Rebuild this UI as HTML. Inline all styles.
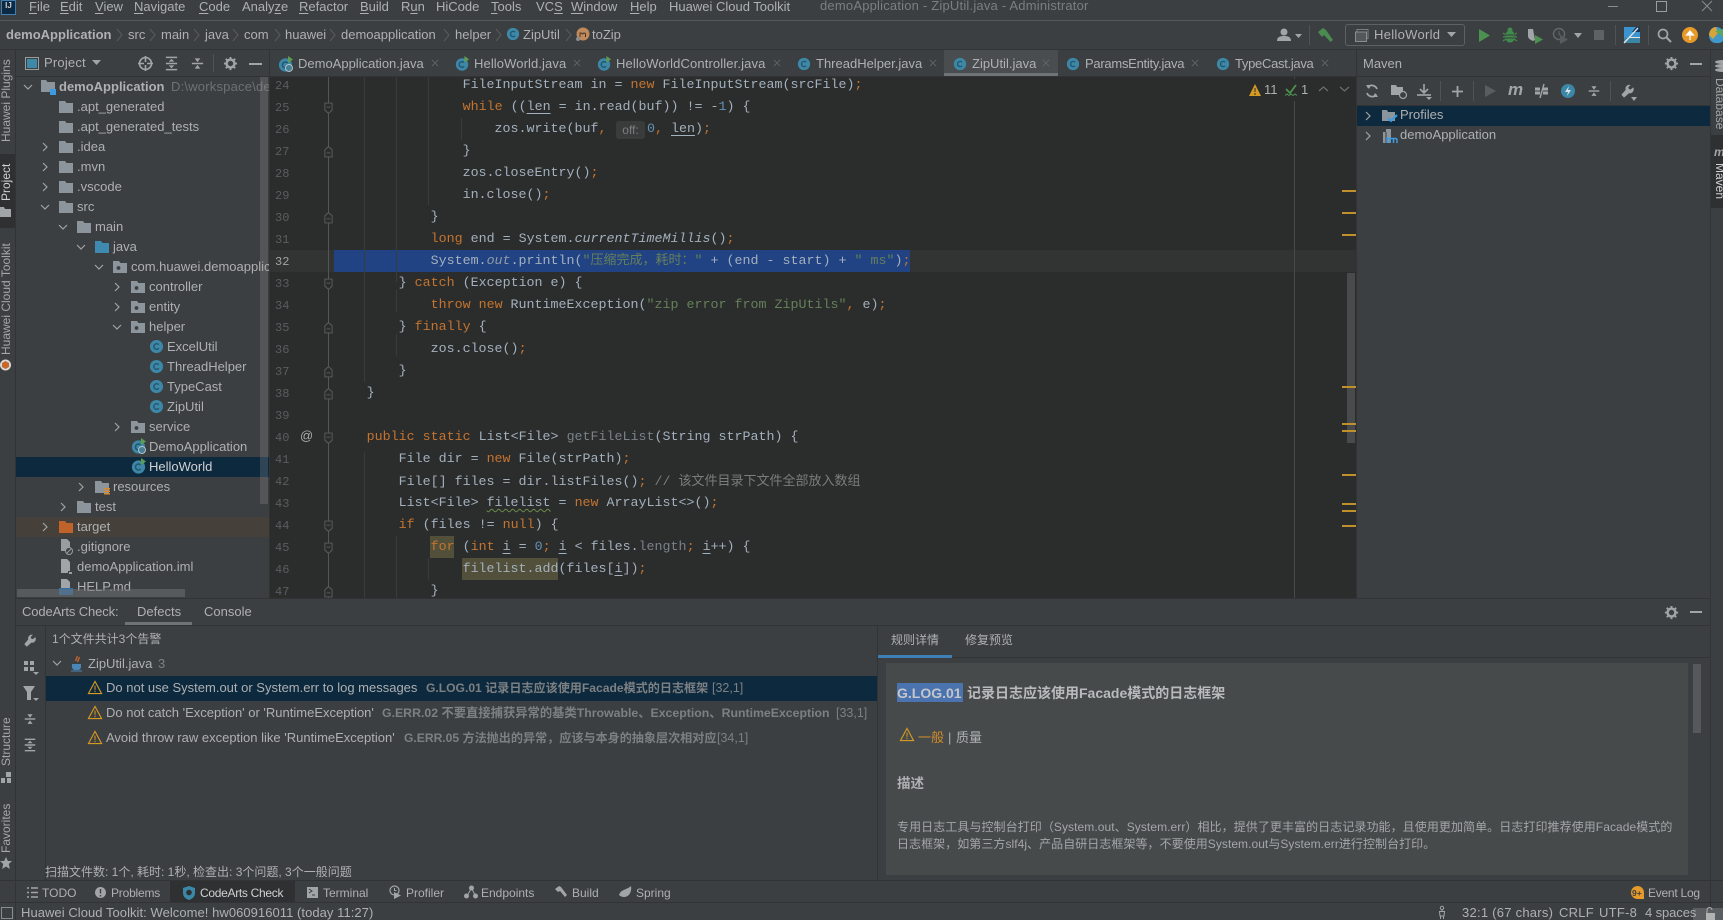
<!DOCTYPE html>
<html><head><meta charset="utf-8"><title>demoApplication - ZipUtil.java</title>
<style>
html,body{margin:0;padding:0;background:#3c3f41;width:1723px;height:920px;overflow:hidden}
body{position:relative;font:13px/20px "Liberation Sans","Noto Sans CJK SC",sans-serif;color:#aeb0b2}
.a,.r,.i,.v,.c,.l{position:absolute}
.a{white-space:pre;height:20px}
.r{display:block}
.i{display:block;overflow:visible}
.v{writing-mode:vertical-rl;white-space:pre;line-height:14px;font-size:12.5px;color:#a4a6a8}
.u{text-decoration:underline;text-decoration-thickness:1px;text-underline-offset:2px}
.c{left:334.6px;height:22px;font:13.33px/22px "Liberation Mono","Noto Sans CJK SC",monospace;color:#a3b0bd;white-space:pre}
.l{left:275px;height:22px;font:12px/22px "Liberation Mono",monospace;color:#5a5d60;white-space:pre}
.k{color:#c4742f}.s{color:#65805a}.n{color:#6591b3}.d{color:#7a8289}.m{color:#7c7c7c}.o{color:#8f9ba7;font-style:italic}
.w{text-decoration:underline wavy #6a8c4a 1px;text-underline-offset:2px}
.un{text-decoration:underline;text-underline-offset:3px}
.dim{color:#7d8082;font-weight:bold;font-size:12.1px}
.gr{color:#7d8082;font-size:12.5px}
</style></head><body>
<svg width="0" height="0" style="position:absolute">
<defs>
<symbol id="cl" viewBox="0 0 16 16"><circle cx="8" cy="8" r="7" fill="#3d88a8"/><path d="M10.4 6a3 3 0 1 0 0 4" fill="none" stroke="#25566c" stroke-width="1.5"/></symbol>
<symbol id="cr" viewBox="0 0 16 16"><circle cx="7.5" cy="9" r="6.6" fill="#3d88a8"/><path d="M9.7 7a3 3 0 1 0 0 4" fill="none" stroke="#25566c" stroke-width="1.5"/><path d="M10 0l5 3.5-5 3.5z" fill="#5e9c50"/></symbol>
<symbol id="f" viewBox="0 0 16 16"><path d="M1 2h6l1.5 2H15v10H1z" fill="#8c959c"/></symbol>
<symbol id="fb" viewBox="0 0 16 16"><path d="M1 2h6l1.5 2H15v10H1z" fill="#3f8ab0"/></symbol>
<symbol id="fo" viewBox="0 0 16 16"><path d="M1 2h6l1.5 2H15v10H1z" fill="#c0632b"/></symbol>
<symbol id="fp" viewBox="0 0 16 16"><path d="M1 2h6l1.5 2H15v10H1z" fill="#8c959c"/><circle cx="6.5" cy="9" r="1.9" fill="#3c3f41"/></symbol>
<symbol id="ch" viewBox="0 0 10 10"><path d="M3 1l4 4-4 4" fill="none" stroke="#a0a3a5" stroke-width="1.2"/></symbol>
<symbol id="cd" viewBox="0 0 10 10"><path d="M1 3l4 4 4-4" fill="none" stroke="#a0a3a5" stroke-width="1.2"/></symbol>
<symbol id="x" viewBox="0 0 10 10"><path d="M1 1l8 8M9 1l-8 8" stroke="#62666a" stroke-width="1"/></symbol>
<symbol id="warn" viewBox="0 0 16 16"><path d="M8 1.5L15 14.5H1z" fill="none" stroke="#d49a22" stroke-width="1.2"/><path d="M8 6v4.5M8 11.5v1.4" stroke="#d49a22" stroke-width="1.1"/></symbol>
<symbol id="gear" viewBox="0 0 16 16"><circle cx="8" cy="8" r="4.2" fill="none" stroke="#a2a5a7" stroke-width="2.6"/><path d="M8 1v2.4M8 12.6V15M1 8h2.4M12.6 8H15M3 3l1.8 1.8M11.2 11.2L13 13M13 3l-1.8 1.8M4.8 11.2L3 13" stroke="#a2a5a7" stroke-width="2"/></symbol>
<symbol id="fold" viewBox="0 0 10 14"><path d="M1 1.5h8v8L5 13 1 9.5z" fill="#2b2c2c" stroke="#5c5f61" stroke-width="1"/><path d="M3 6h4" stroke="#5c5f61"/></symbol>
<symbol id="fold2" viewBox="0 0 10 14"><path d="M1 12.5h8v-8L5 1 1 4.5z" fill="#2b2c2c" stroke="#5c5f61" stroke-width="1"/><path d="M3 8h4" stroke="#5c5f61"/></symbol>
<symbol id="wr" viewBox="0 0 16 16"><path d="M14 3.5l-2.6 2.4-2-.6-.5-2L11.300 1A4.200 4.200 0 0 0 6 6.200L1.500 11.500l2.800 3L9.600 9.800A4.200 4.200 0 0 0 14 3.500z" fill="#a2a5a7"/></symbol>
<symbol id="exp" viewBox="0 0 16 16"><path d="M2 1.500h12M2 14.500h12M2 8h12" stroke="#a2a5a7" stroke-width="1.600"/><path d="M8 3l-3 3h6zM8 13l-3-3h6z" fill="#a2a5a7"/></symbol>
<symbol id="col" viewBox="0 0 16 16"><path d="M2 8h12" stroke="#a2a5a7" stroke-width="1.600"/><path d="M8 6.500l-3-4h6zM8 9.500l-3 4h6z" fill="#a2a5a7"/></symbol>
</defs></svg>

<!-- menu -->
<div class="r" style="left:0;top:20px;width:1723px;height:1px;background:#55585a"></div>
<div class="r" style="left:1px;top:0;width:15px;height:15px;background:#0c2a44;border:1px solid #3f7fb0;box-sizing:border-box;color:#ccc;font:bold 8px/9px 'Liberation Sans',sans-serif;text-align:center">IJ</div>
<div class="a" style="left:29px;top:-3px"><span class="u">F</span>ile</div>
<div class="a" style="left:60px;top:-3px"><span class="u">E</span>dit</div>
<div class="a" style="left:95px;top:-3px"><span class="u">V</span>iew</div>
<div class="a" style="left:134px;top:-3px"><span class="u">N</span>avigate</div>
<div class="a" style="left:199px;top:-3px"><span class="u">C</span>ode</div>
<div class="a" style="left:242px;top:-3px">Analy<span class="u">z</span>e</div>
<div class="a" style="left:299px;top:-3px"><span class="u">R</span>efactor</div>
<div class="a" style="left:360px;top:-3px"><span class="u">B</span>uild</div>
<div class="a" style="left:401px;top:-3px">R<span class="u">u</span>n</div>
<div class="a" style="left:436px;top:-3px">HiCode</div>
<div class="a" style="left:491px;top:-3px"><span class="u">T</span>ools</div>
<div class="a" style="left:536px;top:-3px">VC<span class="u">S</span></div>
<div class="a" style="left:571px;top:-3px"><span class="u">W</span>indow</div>
<div class="a" style="left:630px;top:-3px"><span class="u">H</span>elp</div>
<div class="a" style="left:669px;top:-3px">Huawei Cloud Toolkit</div>
<div class="a" style="left:820px;top:-4px;color:#7c7f81;letter-spacing:.2px">demoApplication - ZipUtil.java - Administrator</div>
<div class="r" style="left:1608px;top:6px;width:10px;height:1px;background:#8a8d8f"></div>
<div class="r" style="left:1656px;top:1px;width:9px;height:9px;border:1px solid #9a9d9f"></div>
<svg class="i" style="left:1702px;top:1px" width="10" height="10"><path d="M0 0l10 10M10 0L0 10" stroke="#8a8d8f" stroke-width="1"/></svg>

<!-- breadcrumb -->
<div class="a" style="left:6px;top:25px;font-weight:bold">demoApplication</div>
<svg class="i" style="left:116px;top:28px" width="8" height="14"><path d="M1 1l5 6-5 6" fill="none" stroke="#595c5e"/></svg>
<div class="a" style="left:128px;top:25px">src</div>
<svg class="i" style="left:149px;top:28px" width="8" height="14"><path d="M1 1l5 6-5 6" fill="none" stroke="#595c5e"/></svg>
<div class="a" style="left:161px;top:25px">main</div>
<svg class="i" style="left:193px;top:28px" width="8" height="14"><path d="M1 1l5 6-5 6" fill="none" stroke="#595c5e"/></svg>
<div class="a" style="left:205px;top:25px">java</div>
<svg class="i" style="left:232px;top:28px" width="8" height="14"><path d="M1 1l5 6-5 6" fill="none" stroke="#595c5e"/></svg>
<div class="a" style="left:244px;top:25px">com</div>
<svg class="i" style="left:274px;top:28px" width="8" height="14"><path d="M1 1l5 6-5 6" fill="none" stroke="#595c5e"/></svg>
<div class="a" style="left:285px;top:25px">huawei</div>
<svg class="i" style="left:329px;top:28px" width="8" height="14"><path d="M1 1l5 6-5 6" fill="none" stroke="#595c5e"/></svg>
<div class="a" style="left:341px;top:25px">demoapplication</div>
<svg class="i" style="left:443px;top:28px" width="8" height="14"><path d="M1 1l5 6-5 6" fill="none" stroke="#595c5e"/></svg>
<div class="a" style="left:455px;top:25px">helper</div>
<svg class="i" style="left:495px;top:28px" width="8" height="14"><path d="M1 1l5 6-5 6" fill="none" stroke="#595c5e"/></svg>
<svg class="i" style="left:506px;top:27px" width="14" height="14"><use href="#cl"/></svg>
<div class="a" style="left:523px;top:25px">ZipUtil</div>
<svg class="i" style="left:565px;top:28px" width="8" height="14"><path d="M1 1l5 6-5 6" fill="none" stroke="#595c5e"/></svg>
<svg class="i" style="left:575px;top:27px" width="15" height="15"><circle cx="8" cy="7" r="6.500" fill="#c08a5c"/><path d="M5 10V6h1c.8 0 1 .4 1.500 1 .5-.6 1-1 1.700-1 .8 0 1.300.5 1.300 1.200V10" fill="none" stroke="#4a3421" stroke-width="1"/><circle cx="3" cy="12" r="2" fill="#8a8d8f"/></svg>
<div class="a" style="left:592px;top:25px">toZip</div>
<div class="r" style="left:0;top:49px;width:1723px;height:1px;background:#323335"></div>

<!-- main toolbar right -->
<svg class="i" style="left:1276px;top:28px" width="26" height="14"><circle cx="8" cy="4" r="3.500" fill="#a2a5a7"/><path d="M1 13c0-4 3-5 7-5s7 1 7 5z" fill="#a2a5a7"/><path d="M19 6h7l-3.500 4z" fill="#a2a5a7"/></svg>
<div class="r" style="left:1309px;top:25px;width:1px;height:20px;background:#505355"></div>
<svg class="i" style="left:1317px;top:27px" width="17" height="16"><path d="M1 5l5-4 3 2 7 10-2.500 2L7 8 5 10z" fill="#4b8a50"/></svg>
<div class="r" style="left:1345px;top:24px;width:120px;height:22px;border:1px solid #5e6163;border-radius:3px;box-sizing:border-box"></div>
<svg class="i" style="left:1355px;top:29px" width="14" height="13"><rect x="2" y="0.500" width="11" height="9" fill="none" stroke="#7c7f81"/><rect x="0.500" y="3" width="11" height="9.500" fill="#55585a" stroke="#8a8d8f"/></svg>
<div class="a" style="left:1374px;top:25px;letter-spacing:.3px">HelloWorld</div>
<svg class="i" style="left:1447px;top:32px" width="10" height="6"><path d="M0 0h9L4.500 5z" fill="#a2a5a7"/></svg>
<svg class="i" style="left:1479px;top:29px" width="11" height="13"><path d="M0 0l11 6.500L0 13z" fill="#4d9150"/></svg>
<svg class="i" style="left:1503px;top:27px" width="14" height="16"><ellipse cx="7" cy="9.500" rx="5" ry="6" fill="#3f8a4c"/><circle cx="7" cy="3" r="2.500" fill="#3f8a4c"/><path d="M0 6l3 2M14 6l-3 2M0 10h3M14 10h-3M0 14l3-2M14 14l-3-2" stroke="#3f8a4c" stroke-width="1.300"/><path d="M2 8h10M2 11h10" stroke="#3c3f41"/></svg>
<svg class="i" style="left:1528px;top:28px" width="16" height="16"><path d="M0 1h10v7c0 3-3 4-5 5-2-1-5-2-5-5z" fill="#a2a5a7"/><path d="M5 1h5v7c0 2-1.500 3-3 4" fill="#3c3f41"/><path d="M7 7l8 4.500L7 16z" fill="#4d9150"/></svg>
<svg class="i" style="left:1553px;top:28px" width="15" height="16" opacity=".5"><circle cx="6" cy="6" r="5.500" fill="none" stroke="#8a8d8f" stroke-width="1.400"/><path d="M6 3v3l2 2" fill="none" stroke="#8a8d8f"/><path d="M7 7l8 4.500L7 16z" fill="#77797b"/></svg>
<svg class="i" style="left:1574px;top:33px" width="8" height="5"><path d="M0 0h8L4 5z" fill="#a2a5a7"/></svg>
<div class="r" style="left:1594px;top:30px;width:10px;height:10px;background:#5f6264"></div>
<div class="r" style="left:1615px;top:25px;width:1px;height:20px;background:#505355"></div>
<svg class="i" style="left:1624px;top:27px" width="16" height="16"><rect width="16" height="16" fill="#3a94d0"/><path d="M16 0v5H8l4-5z" fill="#16365a"/><rect y="11" width="16" height="5" fill="#3a86a4"/><path d="M0 16L14 1" stroke="#e6e6e6" stroke-width="1.300"/><path d="M6 10.500h10" stroke="#e6e6e6"/></svg>
<div class="r" style="left:1648px;top:25px;width:1px;height:20px;background:#505355"></div>
<svg class="i" style="left:1657px;top:28px" width="15" height="15"><circle cx="6" cy="6" r="4.500" fill="none" stroke="#a2a5a7" stroke-width="1.700"/><path d="M9.500 9.500L14 14" stroke="#a2a5a7" stroke-width="2"/></svg>
<svg class="i" style="left:1682px;top:27px" width="16" height="16"><circle cx="8" cy="8" r="8" fill="#e69a2a"/><path d="M8 13V6M4.500 8L8 4l3.500 4z" stroke="#fff" fill="#fff" stroke-width="1.200"/></svg>
<svg class="i" style="left:1709px;top:27px" width="14" height="16"><path d="M7 0a8 8 0 0 1 7 4v10a8 8 0 0 1-7 2C2 16 0 12 0 8s3-8 7-8z" fill="#3f98c8"/><path d="M0 8c0-4 3-8 7-8l2 6-5 6z" fill="#d6a43a"/><path d="M6 4l8-2v8z" fill="#5aa860"/></svg>

<!-- left strip -->
<div class="r" style="left:15px;top:50px;width:1px;height:870px;background:#323335"></div>
<div class="r" style="left:0;top:154px;width:15px;height:74px;background:#2e3032"></div>
<div class="v" style="left:-1px;top:60px;transform:rotate(180deg);height:82px;text-align:center;font-size:12px">Huawei Plugins</div>
<div class="v" style="left:-1px;top:162px;transform:rotate(180deg);height:40px;color:#d0d0d0;text-align:center;font-size:12px">Project</div>
<svg class="i" style="left:0;top:207px" width="11" height="10"><path d="M0 0h4l1 2h6v8H0z" fill="#a2a5a7"/></svg>
<div class="v" style="left:-1px;top:242px;transform:rotate(180deg);height:114px;text-align:center;font-size:12px">Huawei Cloud Toolkit</div>
<svg class="i" style="left:0;top:359px" width="11" height="12"><circle cx="5.500" cy="6" r="5.500" fill="#d9d9d9"/><path d="M2 4l3.500-2L9 4v4l-3.500 2L2 8z" fill="#c8672c"/></svg>
<div class="v" style="left:-1px;top:717px;transform:rotate(180deg);height:50px;text-align:center;font-size:12px">Structure</div>
<svg class="i" style="left:1px;top:772px" width="10" height="11"><path d="M5 0h5v5H5zM0 6h4v5H0zM6 6h4v5H6z" fill="#a2a5a7"/></svg>
<div class="v" style="left:-1px;top:804px;transform:rotate(180deg);height:49px;text-align:center;font-size:12px">Favorites</div>
<svg class="i" style="left:0;top:857px" width="12" height="12"><path d="M6 0l1.800 4H12L8.800 7l1 5L6 9.500 2.200 12l1-5L0 4h4.200z" fill="#a2a5a7"/></svg>

<!-- project panel -->
<div style="position:absolute;left:0;top:0;width:269px;height:598px;overflow:hidden">
<div class="r" style="left:16px;top:76px;width:253px;height:1px;background:#323335"></div>
<svg class="i" style="left:25px;top:57px" width="14" height="13"><rect x=".5" y=".5" width="13" height="12" fill="#3c3f41" stroke="#9a9d9f"/><rect x="2" y="2" width="10" height="9" fill="#3e88a8"/></svg>
<div class="a" style="left:44px;top:53px;letter-spacing:.2px">Project</div>
<svg class="i" style="left:92px;top:60px" width="10" height="6"><path d="M0 0h9L4.500 5z" fill="#a2a5a7"/></svg>
<svg class="i" style="left:138px;top:56px" width="15" height="15"><circle cx="7.500" cy="7.500" r="6" fill="none" stroke="#a2a5a7" stroke-width="1.600"/><path d="M7.500 0v6M7.500 9v6M0 7.500h6M9 7.500h6" stroke="#a2a5a7" stroke-width="1.600"/></svg>
<svg class="i" style="left:164px;top:56px" width="15" height="15"><use href="#exp"/></svg>
<svg class="i" style="left:190px;top:56px" width="15" height="15"><use href="#col"/></svg>
<div class="r" style="left:213px;top:54px;width:1px;height:18px;background:#505355"></div>
<svg class="i" style="left:223px;top:56px" width="15" height="15"><use href="#gear"/></svg>
<div class="r" style="left:249px;top:63px;width:13px;height:2px;background:#a2a5a7"></div>

<div class="r" style="left:16px;top:457px;width:253px;height:20px;background:#0d293e"></div>
<div class="r" style="left:16px;top:517px;width:253px;height:20px;background:#45403a"></div>

<svg class="i" style="left:23px;top:82px" width="10" height="10"><use href="#cd"/></svg>
<svg class="i" style="left:40px;top:79px" width="16" height="16"><path d="M1 1h5l1.500 2H15v10H1z" fill="#8c959c"/><rect x="10" y="10" width="6" height="6" fill="#3b9ae0"/></svg>
<div class="a" style="left:59px;top:77px;font-weight:bold;font-size:13px">demoApplication</div>
<div class="a" style="left:171px;top:77px;color:#6e7173;letter-spacing:.2px">D:\workspace\demoApplication</div>
<svg class="i" style="left:58px;top:99px" width="16" height="16"><use href="#f"/></svg><div class="a" style="left:77px;top:97px">.apt_generated</div>
<svg class="i" style="left:58px;top:119px" width="16" height="16"><use href="#f"/></svg><div class="a" style="left:77px;top:117px">.apt_generated_tests</div>
<svg class="i" style="left:40px;top:142px" width="10" height="10"><use href="#ch"/></svg><svg class="i" style="left:58px;top:139px" width="16" height="16"><use href="#f"/></svg><div class="a" style="left:77px;top:137px">.idea</div>
<svg class="i" style="left:40px;top:162px" width="10" height="10"><use href="#ch"/></svg><svg class="i" style="left:58px;top:159px" width="16" height="16"><use href="#f"/></svg><div class="a" style="left:77px;top:157px">.mvn</div>
<svg class="i" style="left:40px;top:182px" width="10" height="10"><use href="#ch"/></svg><svg class="i" style="left:58px;top:179px" width="16" height="16"><use href="#f"/></svg><div class="a" style="left:77px;top:177px">.vscode</div>
<svg class="i" style="left:40px;top:202px" width="10" height="10"><use href="#cd"/></svg><svg class="i" style="left:58px;top:199px" width="16" height="16"><use href="#f"/></svg><div class="a" style="left:77px;top:197px">src</div>
<svg class="i" style="left:58px;top:222px" width="10" height="10"><use href="#cd"/></svg><svg class="i" style="left:76px;top:219px" width="16" height="16"><use href="#f"/></svg><div class="a" style="left:95px;top:217px">main</div>
<svg class="i" style="left:76px;top:242px" width="10" height="10"><use href="#cd"/></svg><svg class="i" style="left:94px;top:239px" width="16" height="16"><use href="#fb"/></svg><div class="a" style="left:113px;top:237px">java</div>
<svg class="i" style="left:94px;top:262px" width="10" height="10"><use href="#cd"/></svg><svg class="i" style="left:112px;top:259px" width="16" height="16"><use href="#fp"/></svg><div class="a" style="left:131px;top:257px">com.huawei.demoapplication</div>
<svg class="i" style="left:112px;top:282px" width="10" height="10"><use href="#ch"/></svg><svg class="i" style="left:130px;top:279px" width="16" height="16"><use href="#fp"/></svg><div class="a" style="left:149px;top:277px">controller</div>
<svg class="i" style="left:112px;top:302px" width="10" height="10"><use href="#ch"/></svg><svg class="i" style="left:130px;top:299px" width="16" height="16"><use href="#fp"/></svg><div class="a" style="left:149px;top:297px">entity</div>
<svg class="i" style="left:112px;top:322px" width="10" height="10"><use href="#cd"/></svg><svg class="i" style="left:130px;top:319px" width="16" height="16"><use href="#fp"/></svg><div class="a" style="left:149px;top:317px">helper</div>
<svg class="i" style="left:149px;top:339px" width="15" height="15"><use href="#cl"/></svg><div class="a" style="left:167px;top:337px">ExcelUtil</div>
<svg class="i" style="left:149px;top:359px" width="15" height="15"><use href="#cl"/></svg><div class="a" style="left:167px;top:357px">ThreadHelper</div>
<svg class="i" style="left:149px;top:379px" width="15" height="15"><use href="#cl"/></svg><div class="a" style="left:167px;top:377px">TypeCast</div>
<svg class="i" style="left:149px;top:399px" width="15" height="15"><use href="#cl"/></svg><div class="a" style="left:167px;top:397px">ZipUtil</div>
<svg class="i" style="left:112px;top:422px" width="10" height="10"><use href="#ch"/></svg><svg class="i" style="left:130px;top:419px" width="16" height="16"><use href="#fp"/></svg><div class="a" style="left:149px;top:417px">service</div>
<svg class="i" style="left:131px;top:438px" width="16" height="16"><use href="#cr"/><circle cx="11" cy="12" r="3.500" fill="#4a7f98" stroke="#cfd8dc" stroke-width=".8"/></svg><div class="a" style="left:149px;top:437px">DemoApplication</div>
<svg class="i" style="left:131px;top:458px" width="16" height="16"><use href="#cr"/></svg><div class="a" style="left:149px;top:457px;color:#cfd1d3">HelloWorld</div>
<svg class="i" style="left:76px;top:482px" width="10" height="10"><use href="#ch"/></svg><svg class="i" style="left:94px;top:479px" width="16" height="16"><path d="M1 2h6l1.500 2H15v10H1z" fill="#8c959c"/><path d="M10 9h6v1.500h-6zM10 11.500h6V13h-6zM10 14h6v1.500h-6z" fill="#d98a2c"/></svg><div class="a" style="left:113px;top:477px">resources</div>
<svg class="i" style="left:58px;top:502px" width="10" height="10"><use href="#ch"/></svg><svg class="i" style="left:76px;top:499px" width="16" height="16"><use href="#f"/></svg><div class="a" style="left:95px;top:497px">test</div>
<svg class="i" style="left:40px;top:522px" width="10" height="10"><use href="#ch"/></svg><svg class="i" style="left:58px;top:519px" width="16" height="16"><use href="#fo"/></svg><div class="a" style="left:77px;top:517px">target</div>
<svg class="i" style="left:60px;top:539px" width="14" height="16"><path d="M1 0h6l3 3v9H1z" fill="#9a9d9f"/><circle cx="9" cy="12" r="3.500" fill="#3c3f41" stroke="#9a9d9f"/><path d="M7 14l4-4" stroke="#9a9d9f"/></svg><div class="a" style="left:77px;top:537px">.gitignore</div>
<svg class="i" style="left:60px;top:559px" width="14" height="16"><path d="M1 0h6l3 3v11H1z" fill="#a2a5a7"/><rect x="8" y="12" width="5" height="4" fill="#3c3f41"/><path d="M9 14h3" stroke="#fff"/></svg><div class="a" style="left:77px;top:557px">demoApplication.iml</div>
<svg class="i" style="left:59px;top:579px" width="15" height="18"><path d="M2 0h6l3 3v7H2z" fill="#a2a5a7"/><rect y="9" width="14" height="7" fill="#2f6fa8"/></svg><div class="a" style="left:77px;top:577px">HELP.md</div>
<div class="r" style="left:260px;top:77px;width:8px;height:427px;background:rgba(150,153,156,.25)"></div>
<div class="r" style="left:17px;top:589px;width:168px;height:8px;background:rgba(110,113,116,.55)"></div>
</div>

<!-- tabs -->
<div class="r" style="left:269px;top:50px;width:1px;height:548px;background:#323335"></div>
<div class="r" style="left:944px;top:50px;width:114px;height:23px;background:#4a4d4f"></div>
<div class="r" style="left:944px;top:73px;width:114px;height:3px;background:#6f7375"></div>
<div class="r" style="left:269px;top:76px;width:1088px;height:1px;background:#323335"></div>
<svg class="i" style="left:278px;top:56px" width="16" height="16"><use href="#cr"/><circle cx="11" cy="12" r="3.500" fill="#4a7f98" stroke="#cfd8dc" stroke-width=".8"/></svg><div class="a" style="left:298px;top:54px">DemoApplication.java</div><svg class="i" style="left:431px;top:59px" width="8" height="8"><use href="#x"/></svg>
<svg class="i" style="left:455px;top:56px" width="15" height="15"><use href="#cr"/></svg><div class="a" style="left:474px;top:54px;letter-spacing:.1px">HelloWorld.java</div><svg class="i" style="left:573px;top:59px" width="8" height="8"><use href="#x"/></svg>
<svg class="i" style="left:597px;top:56px" width="15" height="15"><use href="#cr"/></svg><div class="a" style="left:616px;top:54px;letter-spacing:.12px">HelloWorldController.java</div><svg class="i" style="left:773px;top:59px" width="8" height="8"><use href="#x"/></svg>
<svg class="i" style="left:797px;top:57px" width="14" height="14"><use href="#cl"/></svg><div class="a" style="left:816px;top:54px">ThreadHelper.java</div><svg class="i" style="left:929px;top:59px" width="8" height="8"><use href="#x"/></svg>
<svg class="i" style="left:953px;top:57px" width="14" height="14"><use href="#cl"/></svg><div class="a" style="left:972px;top:54px">ZipUtil.java</div><svg class="i" style="left:1042px;top:59px" width="8" height="8"><use href="#x"/></svg>
<svg class="i" style="left:1066px;top:57px" width="14" height="14"><use href="#cl"/></svg><div class="a" style="left:1085px;top:54px;letter-spacing:-.27px">ParamsEntity.java</div><svg class="i" style="left:1191px;top:59px" width="8" height="8"><use href="#x"/></svg>
<svg class="i" style="left:1216px;top:57px" width="14" height="14"><use href="#cl"/></svg><div class="a" style="left:1235px;top:54px;letter-spacing:-.3px">TypeCast.java</div><svg class="i" style="left:1321px;top:59px" width="8" height="8"><use href="#x"/></svg>

<!-- editor -->
<div style="position:absolute;left:0;top:0;width:1357px;height:598px;overflow:hidden">
<div class="r" style="left:270px;top:77px;width:1087px;height:521px;background:#2b2c2c"></div>
<div class="r" style="left:270px;top:250px;width:1087px;height:22px;background:#323333"></div>
<div class="r" style="left:334px;top:250px;width:576px;height:22px;background:#214283"></div>
<div class="r" style="left:1294px;top:77px;width:1px;height:521px;background:#484a4a"></div>
<div class="r" style="left:328px;top:77px;width:1px;height:521px;background:#535556"></div>
<!-- indent guides -->
<div class="r" style="left:364px;top:77px;width:1px;height:305px;background:#3a3c3c"></div>
<div class="r" style="left:396px;top:77px;width:1px;height:205px;background:#3a3c3c"></div>
<div class="r" style="left:428px;top:77px;width:1px;height:128px;background:#3a3c3c"></div>
<div class="r" style="left:461px;top:118px;width:1px;height:22px;background:#3a3c3c"></div>
<div class="r" style="left:396px;top:290px;width:1px;height:22px;background:#3a3c3c"></div>
<div class="r" style="left:396px;top:334px;width:1px;height:22px;background:#3a3c3c"></div>
<div class="r" style="left:364px;top:452px;width:1px;height:146px;background:#3a3c3c"></div>
<div class="r" style="left:396px;top:536px;width:1px;height:62px;background:#3a3c3c"></div>
<div class="r" style="left:428px;top:558px;width:1px;height:22px;background:#3a3c3c"></div>
<!-- highlights -->
<div class="r" style="left:430px;top:536px;width:24px;height:22px;background:#52503a"></div>
<div class="r" style="left:462px;top:558px;width:96px;height:22px;background:#52503a"></div>
<!-- fold -->
<svg class="i" style="left:324px;top:101px" width="9" height="14"><use href="#fold"/></svg>
<svg class="i" style="left:324px;top:145px" width="9" height="14"><use href="#fold2"/></svg>
<svg class="i" style="left:324px;top:211px" width="9" height="14"><use href="#fold2"/></svg>
<svg class="i" style="left:324px;top:277px" width="9" height="14"><use href="#fold"/></svg>
<svg class="i" style="left:324px;top:321px" width="9" height="14"><use href="#fold2"/></svg>
<svg class="i" style="left:324px;top:365px" width="9" height="14"><use href="#fold2"/></svg>
<svg class="i" style="left:324px;top:387px" width="9" height="14"><use href="#fold2"/></svg>
<svg class="i" style="left:324px;top:431px" width="9" height="14"><use href="#fold"/></svg>
<svg class="i" style="left:324px;top:519px" width="9" height="14"><use href="#fold"/></svg>
<svg class="i" style="left:324px;top:541px" width="9" height="14"><use href="#fold"/></svg>
<svg class="i" style="left:324px;top:585px" width="9" height="14"><use href="#fold2"/></svg>
<!-- nums -->
<div class="l" style="top:75px">24</div><div class="l" style="top:97px">25</div><div class="l" style="top:119px">26</div><div class="l" style="top:141px">27</div><div class="l" style="top:163px">28</div><div class="l" style="top:185px">29</div><div class="l" style="top:207px">30</div><div class="l" style="top:229px">31</div><div class="l" style="top:251px;color:#a4a3a3">32</div><div class="l" style="top:273px">33</div><div class="l" style="top:295px">34</div><div class="l" style="top:317px">35</div><div class="l" style="top:339px">36</div><div class="l" style="top:361px">37</div><div class="l" style="top:383px">38</div><div class="l" style="top:405px">39</div><div class="l" style="top:427px">40</div><div class="l" style="top:449px">41</div><div class="l" style="top:471px">42</div><div class="l" style="top:493px">43</div><div class="l" style="top:515px">44</div><div class="l" style="top:537px">45</div><div class="l" style="top:559px">46</div><div class="l" style="top:581px">47</div>
<div class="a" style="left:300px;top:426px;color:#a9abad;font-size:13px">@</div>
<!-- code -->
<div class="c" style="top:75px">                FileInputStream in = <span class="k">new</span> FileInputStream(srcFile)<span class="k">;</span></div>
<div class="c" style="top:97px">                <span class="k">while</span> ((<span class="un">len</span> = in.read(buf)) != -<span class="n">1</span>) {</div>
<div class="c" style="top:119px">                    zos.write(buf<span class="k">,</span></div>
<div class="r" style="left:616px;top:121px;width:29px;height:18px;background:#3a3c3c;border-radius:3px;color:#7c7f81;font-size:12px;line-height:18px;text-align:center">off:</div>
<div class="c" style="left:647px;top:119px"><span class="n">0</span><span class="k">,</span> <span class="un">len</span>)<span class="k">;</span></div>
<div class="c" style="top:141px">                }</div>
<div class="c" style="top:163px">                zos.closeEntry()<span class="k">;</span></div>
<div class="c" style="top:185px">                in.close()<span class="k">;</span></div>
<div class="c" style="top:207px">            }</div>
<div class="c" style="top:229px">            <span class="k">long</span> end = System.<span style="font-style:italic">currentTimeMillis</span>()<span class="k">;</span></div>
<div class="c" style="top:251px">            System.<span class="o">out</span>.println(<span class="s">"<span style="display:inline-block;width:104px;font-size:13px;line-height:16px">压缩完成，耗时：</span>"</span> + (end - start) + <span class="s">" ms"</span>)<span class="k">;</span></div>
<div class="c" style="top:273px">        } <span class="k">catch</span> (Exception e) {</div>
<div class="c" style="top:295px">            <span class="k">throw new</span> RuntimeException(<span class="s">"zip error from ZipUtils"</span><span class="k">,</span> e)<span class="k">;</span></div>
<div class="c" style="top:317px">        } <span class="k">finally</span> {</div>
<div class="c" style="top:339px">            zos.close()<span class="k">;</span></div>
<div class="c" style="top:361px">        }</div>
<div class="c" style="top:383px">    }</div>
<div class="c" style="top:427px">    <span class="k">public static</span> List&lt;File&gt; <span class="d">getFileList</span>(String strPath) {</div>
<div class="c" style="top:449px">        File dir = <span class="k">new</span> File(strPath)<span class="k">;</span></div>
<div class="c" style="top:471px">        File[] files = dir.listFiles()<span class="k">;</span> <span class="m">// <span style="font-size:13px">该文件目录下文件全部放入数组</span></span></div>
<div class="c" style="top:493px">        List&lt;File&gt; <span class="w">filelist</span> = <span class="k">new</span> ArrayList&lt;&gt;()<span class="k">;</span></div>
<div class="c" style="top:515px">        <span class="k">if</span> (files != <span class="k">null</span>) {</div>
<div class="c" style="top:537px">            <span class="k">for</span> (<span class="k">int</span> <span class="un">i</span> = <span class="n">0</span><span class="k">;</span> <span class="un">i</span> &lt; files.<span class="d">length</span><span class="k">;</span> <span class="un">i</span>++) {</div>
<div class="c" style="top:559px">                filelist.add(files[<span class="un">i</span>])<span class="k">;</span></div>
<div class="c" style="top:581px">            }</div>
<!-- right stripe -->
<div class="r" style="left:1347px;top:273px;width:8px;height:170px;background:#484a4b"></div>
<div class="r" style="left:1342px;top:190px;width:14px;height:2px;background:#c0912a"></div>
<div class="r" style="left:1342px;top:212px;width:14px;height:2px;background:#c0912a"></div>
<div class="r" style="left:1342px;top:234px;width:14px;height:2px;background:#c0912a"></div>
<div class="r" style="left:1342px;top:386px;width:14px;height:2px;background:#c0912a"></div>
<div class="r" style="left:1342px;top:423px;width:14px;height:2px;background:#c0912a"></div>
<div class="r" style="left:1342px;top:430px;width:14px;height:2px;background:#c0912a"></div>
<div class="r" style="left:1342px;top:474px;width:14px;height:2px;background:#c0912a"></div>
<div class="r" style="left:1342px;top:503px;width:14px;height:2px;background:#c0912a"></div>
<div class="r" style="left:1342px;top:510px;width:14px;height:2px;background:#c0912a"></div>
<div class="r" style="left:1342px;top:525px;width:14px;height:2px;background:#c0912a"></div>
<!-- inspection widget -->
<div class="r" style="left:1249px;top:79px;width:108px;height:22px;background:#2b2c2c"></div>
<svg class="i" style="left:1249px;top:84px" width="12" height="12"><path d="M6 0l6 12H0z" fill="#d49a22"/><path d="M6 4v4M6 9v2" stroke="#2b2c2c"/></svg>
<div class="a" style="left:1264px;top:80px">11</div>
<svg class="i" style="left:1285px;top:84px" width="12" height="13"><path d="M1 5l4 4 6-8" fill="none" stroke="#4d9150" stroke-width="1.800"/><path d="M0 11.500l2-1.500 2 1.500 2-1.500 2 1.500 2-1.500 2 1.500" fill="none" stroke="#4d9150"/></svg>
<div class="a" style="left:1301px;top:80px">1</div>
<svg class="i" style="left:1319px;top:86px" width="9" height="6"><path d="M0 5l4.500-4L9 5" fill="none" stroke="#6c6f71" stroke-width="1.200"/></svg>
<svg class="i" style="left:1340px;top:86px" width="9" height="6"><path d="M0 1l4.500 4L9 1" fill="none" stroke="#6c6f71" stroke-width="1.200"/></svg>
</div>

<!-- maven -->
<div class="r" style="left:1356px;top:50px;width:1px;height:548px;background:#323335"></div>
<div class="r" style="left:1710px;top:50px;width:1px;height:870px;background:#323335"></div>
<div class="r" style="left:1357px;top:76px;width:353px;height:1px;background:#323335"></div>
<div class="r" style="left:1357px;top:105px;width:353px;height:1px;background:#323335"></div>
<div class="a" style="left:1363px;top:54px">Maven</div>
<svg class="i" style="left:1664px;top:56px" width="15" height="15"><use href="#gear"/></svg>
<div class="r" style="left:1690px;top:63px;width:12px;height:2px;background:#a2a5a7"></div>
<svg class="i" style="left:1365px;top:84px" width="14" height="14"><path d="M12 5A5.500 5.500 0 0 0 2.500 3.500M2 9a5.500 5.500 0 0 0 9.500 1.500" fill="none" stroke="#a2a5a7" stroke-width="1.800"/><path d="M1 1l3 4 2-4zM13 13l-3-4-2 4z" fill="#a2a5a7"/></svg>
<svg class="i" style="left:1391px;top:84px" width="16" height="15"><path d="M0 1h5l1 2h6v8H0z" fill="#a2a5a7"/><circle cx="12" cy="11" r="3.500" fill="#3c3f41" stroke="#a2a5a7" stroke-width="1.200"/></svg>
<svg class="i" style="left:1417px;top:84px" width="16" height="16"><path d="M7 0v8M3 5l4 4 4-4" fill="none" stroke="#a2a5a7" stroke-width="1.600"/><path d="M0 11h14" stroke="#a2a5a7" stroke-width="1.600"/><path d="M9 13h6l-3 3z" fill="#a2a5a7"/></svg>
<div class="r" style="left:1440px;top:81px;width:1px;height:20px;background:#505355"></div>
<svg class="i" style="left:1452px;top:86px" width="11" height="11"><path d="M5.500 0v11M0 5.500h11" stroke="#a2a5a7" stroke-width="1.800"/></svg>
<div class="r" style="left:1473px;top:81px;width:1px;height:20px;background:#505355"></div>
<svg class="i" style="left:1485px;top:85px" width="11" height="12"><path d="M0 0l11 6L0 12z" fill="#5a5d5f"/></svg>
<div class="a" style="left:1508px;top:80px;font:italic bold 17px/20px 'Liberation Sans',sans-serif;color:#a2a5a7">m</div>
<svg class="i" style="left:1535px;top:84px" width="14" height="14"><path d="M0 5h14M0 9h14" stroke="#a2a5a7" stroke-width="3" stroke-dasharray="5 3"/><path d="M9 0L5 14" stroke="#a2a5a7" stroke-width="1.400"/></svg>
<svg class="i" style="left:1561px;top:84px" width="14" height="14"><circle cx="7" cy="7" r="7" fill="#3b87a8"/><path d="M8 2L4 8h3l-1 4 4-6H7z" fill="#d9e2e6"/></svg>
<svg class="i" style="left:1587px;top:84px" width="14" height="14"><use href="#col"/></svg>
<div class="r" style="left:1610px;top:81px;width:1px;height:20px;background:#505355"></div>
<svg class="i" style="left:1620px;top:84px" width="15" height="15"><use href="#wr"/></svg>
<svg class="i" style="left:1631px;top:97px" width="6" height="4"><path d="M0 0h6L3 4z" fill="#a2a5a7"/></svg>
<div class="r" style="left:1357px;top:106px;width:353px;height:20px;background:#0d293e"></div>
<svg class="i" style="left:1363px;top:111px" width="10" height="10"><use href="#ch"/></svg>
<svg class="i" style="left:1382px;top:109px" width="16" height="15"><path d="M0 1h5l1 2h7v9H0z" fill="#8c959c"/><path d="M6 9l3 3 6-6" fill="none" stroke="#3b9ae0" stroke-width="2"/></svg>
<div class="a" style="left:1400px;top:105px">Profiles</div>
<svg class="i" style="left:1363px;top:131px" width="10" height="10"><use href="#ch"/></svg>
<svg class="i" style="left:1383px;top:129px" width="15" height="15"><path d="M0 3h3V0h5v14H0z" fill="#8c959c"/><path d="M3 3v11" stroke="#3c3f41"/><path d="M4 14V9.500h8.500c1 0 1.500.5 1.500 1.500v3M7 14V10M10.500 14V10" fill="none" stroke="#3b9ae0" stroke-width="1.500"/></svg>
<div class="a" style="left:1400px;top:125px">demoApplication</div>
<!-- right strip -->
<div class="r" style="left:1711px;top:135px;width:12px;height:73px;background:#2e3032"></div>
<svg class="i" style="left:1715px;top:60px" width="8" height="12"><ellipse cx="8" cy="2" rx="8" ry="2" fill="#a2a5a7"/><ellipse cx="8" cy="6" rx="8" ry="2" fill="#a2a5a7"/><ellipse cx="8" cy="10" rx="8" ry="2" fill="#a2a5a7"/></svg>
<div class="v" style="left:1713px;top:78px;font-size:12px">Database</div>
<div class="a" style="left:1714px;top:142px;font:italic bold 12px/20px 'Liberation Sans',sans-serif;color:#a2a5a7">m</div>
<div class="v" style="left:1713px;top:163px;color:#d0d0d0;font-size:12px">Maven</div>

<!-- bottom -->
<div class="r" style="left:16px;top:598px;width:1694px;height:1px;background:#323335"></div>
<div class="a" style="left:22px;top:602px;letter-spacing:-.12px">CodeArts Check:</div>
<div class="a" style="left:137px;top:602px">Defects</div>
<div class="r" style="left:125px;top:622px;width:67px;height:3px;background:#6f7375"></div>
<div class="a" style="left:204px;top:602px">Console</div>
<div class="r" style="left:16px;top:625px;width:1694px;height:1px;background:#323335"></div>
<svg class="i" style="left:1664px;top:605px" width="15" height="15"><use href="#gear"/></svg>
<div class="r" style="left:1690px;top:611px;width:12px;height:2px;background:#a2a5a7"></div>
<div class="r" style="left:45px;top:626px;width:1px;height:254px;background:#323335"></div>
<div class="r" style="left:877px;top:626px;width:1px;height:254px;background:#323335"></div>
<svg class="i" style="left:23px;top:634px" width="14" height="14"><use href="#wr"/></svg>
<svg class="i" style="left:24px;top:661px" width="15" height="15"><path d="M0 0h4v4H0zM6 0h4v4H6zM0 6h4v4H0zM6 6h4v4H6z" fill="#a2a5a7"/><path d="M9 11h6l-3 3z" fill="#a2a5a7"/></svg>
<svg class="i" style="left:23px;top:686px" width="16" height="16"><path d="M0 0h12L8 6v8H4V6z" fill="#a2a5a7"/><path d="M10 12h6l-3 3z" fill="#a2a5a7"/></svg>
<svg class="i" style="left:23px;top:712px" width="14" height="14"><use href="#col"/></svg>
<svg class="i" style="left:23px;top:738px" width="14" height="14"><use href="#exp"/></svg>
<div class="a" style="left:52px;top:629px;font-size:12px">1个文件共计3个告警</div>
<svg class="i" style="left:52px;top:658px" width="10" height="10"><use href="#cd"/></svg>
<svg class="i" style="left:70px;top:656px" width="14" height="16"><path d="M7 0c1 2-2 3-1 5M9 1c1 2-2 3-1 5" fill="none" stroke="#c8672c" stroke-width="1.300"/><path d="M2 8h9v3a3 3 0 0 1-3 3H5a3 3 0 0 1-3-3z" fill="#4a86b8"/><path d="M1 15h11" stroke="#4a86b8"/></svg>
<div class="a" style="left:88px;top:654px">ZipUtil.java</div>
<div class="a" style="left:158px;top:654px;color:#7d8082">3</div>
<div class="r" style="left:46px;top:676px;width:831px;height:25px;background:#0d293e"></div>
<svg class="i" style="left:87px;top:680px" width="16" height="15"><use href="#warn"/></svg>
<div class="a" style="left:106px;top:678px">Do not use System.out or System.err to log messages</div>
<div class="a dim" style="left:426px;top:678px">G.LOG.01 记录日志应该使用Facade模式的日志框架</div>
<div class="a gr" style="left:712px;top:678px">[32,1]</div>
<svg class="i" style="left:87px;top:705px" width="16" height="15"><use href="#warn"/></svg>
<div class="a" style="left:106px;top:703px">Do not catch 'Exception' or 'RuntimeException'</div>
<div class="a dim" style="left:382px;top:703px;font-size:12.3px">G.ERR.02 不要直接捕获异常的基类Throwable、Exception、RuntimeException</div>
<div class="a gr" style="left:836px;top:703px">[33,1]</div>
<svg class="i" style="left:87px;top:730px" width="16" height="15"><use href="#warn"/></svg>
<div class="a" style="left:106px;top:728px">Avoid throw raw exception like 'RuntimeException'</div>
<div class="a dim" style="left:404px;top:728px">G.ERR.05 方法抛出的异常，应该与本身的抽象层次相对应</div>
<div class="a gr" style="left:717px;top:728px">[34,1]</div>
<div class="a" style="left:45px;top:862px;font-size:12px">扫描文件数: 1个, 耗时: 1秒, 检查出: 3个问题, 3个一般问题</div>

<div class="a" style="left:891px;top:630px;font-size:12px">规则详情</div>
<div class="a" style="left:965px;top:630px;font-size:12px">修复预览</div>
<div class="r" style="left:878px;top:657px;width:832px;height:1px;background:#323335"></div>
<div class="r" style="left:878px;top:655px;width:74px;height:3px;background:#3e7fb5"></div>
<div class="r" style="left:886px;top:663px;width:802px;height:212px;background:#464a4b"></div>
<div class="r" style="left:1693px;top:664px;width:8px;height:69px;background:#56585b"></div>
<div class="r" style="left:897px;top:683px;width:66px;height:19px;background:#4a73b0"></div>
<div class="a" style="left:897px;top:683px;font-weight:bold;font-size:14px;color:#c4c6c8">G.LOG.01</div>
<div class="a" style="left:967px;top:683px;font-weight:bold;font-size:14px;color:#b8babc">记录日志应该使用Facade模式的日志框架</div>
<svg class="i" style="left:899px;top:727px" width="16" height="15"><use href="#warn"/></svg>
<div class="a" style="left:918px;top:728px;color:#d08a2c">一般</div>
<div class="a" style="left:948px;top:728px">|</div>
<div class="a" style="left:956px;top:728px">质量</div>
<div class="a" style="left:897px;top:774px;font-weight:bold;font-size:13.5px">描述</div>
<div class="a" style="left:897px;top:817px;font-size:12px;color:#a4a6a8;letter-spacing:.07px">专用日志工具与控制台打印（System.out、System.err）相比，提供了更丰富的日志记录功能，且使用更加简单。日志打印推荐使用Facade模式的</div>
<div class="a" style="left:897px;top:834px;font-size:12px;color:#a4a6a8;letter-spacing:.05px">日志框架，如第三方slf4j、产品自研日志框架等，不要使用System.out与System.err进行控制台打印。</div>

<!-- tool strip -->
<div class="r" style="left:0;top:880px;width:1723px;height:1px;background:#323335"></div>
<div class="r" style="left:170px;top:881px;width:125px;height:21px;background:#2e3032"></div>
<div class="r" style="left:0;top:902px;width:1723px;height:1px;background:#323335"></div>
<svg class="i" style="left:27px;top:887px" width="11" height="11"><path d="M0 1h2M4 1h7M0 5.500h2M4 5.500h7M0 10h2M4 10h7" stroke="#a2a5a7" stroke-width="1.500"/></svg>
<div class="a" style="left:42px;top:883px;font-size:12px">TODO</div>
<svg class="i" style="left:95px;top:887px" width="11" height="11"><circle cx="5.500" cy="5.500" r="5.500" fill="#a2a5a7"/><path d="M5.500 2v4.500M5.500 8v1.500" stroke="#3c3f41" stroke-width="1.400"/></svg>
<div class="a" style="left:111px;top:883px;font-size:12px;letter-spacing:-.2px">Problems</div>
<svg class="i" style="left:182px;top:886px" width="14" height="14"><path d="M7 0l6 2v5c0 4-3 6-6 7-3-1-6-3-6-7V2z" fill="#3b87a8"/><circle cx="7" cy="6.500" r="2.800" fill="#2e3032"/></svg>
<div class="a" style="left:200px;top:883px;font-size:12px;color:#cfd1d3;letter-spacing:-.3px">CodeArts Check</div>
<svg class="i" style="left:307px;top:887px" width="11" height="11"><rect width="11" height="11" fill="#a2a5a7"/><path d="M2 2l3 2-3 2M5 8h3" fill="none" stroke="#3c3f41"/></svg>
<div class="a" style="left:323px;top:883px;font-size:12px">Terminal</div>
<svg class="i" style="left:389px;top:885px" width="13" height="14"><circle cx="5.500" cy="5.500" r="4.500" fill="none" stroke="#a2a5a7" stroke-width="1.200"/><path d="M5.500 3v2.500h2" fill="none" stroke="#a2a5a7"/><path d="M5 7l7 3.500L5 14z" fill="#a2a5a7"/></svg>
<div class="a" style="left:406px;top:883px;font-size:12px">Profiler</div>
<svg class="i" style="left:464px;top:885px" width="14" height="14"><circle cx="7.500" cy="3" r="2.500" fill="#a2a5a7"/><circle cx="2.500" cy="11" r="2.500" fill="#a2a5a7"/><circle cx="11.500" cy="11" r="2.500" fill="#a2a5a7"/><path d="M7.500 3L3 11M7.500 3l4 8" stroke="#a2a5a7"/></svg>
<div class="a" style="left:481px;top:883px;font-size:12px">Endpoints</div>
<svg class="i" style="left:555px;top:885px" width="13" height="13"><path d="M0 4l4-3 2 1 6 8-2 2-5-6-2 1z" fill="#a2a5a7"/></svg>
<div class="a" style="left:572px;top:883px;font-size:12px">Build</div>
<svg class="i" style="left:619px;top:886px" width="13" height="12"><path d="M12 0c1 6-2 11-7 11-2 0-4-1-5-2C2 3 8 4 12 0z" fill="#a2a5a7"/></svg>
<div class="a" style="left:636px;top:883px;font-size:12px">Spring</div>
<svg class="i" style="left:1631px;top:886px" width="13" height="13"><path d="M6.500 0A6.500 6.500 0 0 1 13 6.500V13H6.500A6.500 6.500 0 0 1 6.500 0z" fill="#e69a2a"/><text x="1" y="10" font-family="Liberation Sans,sans-serif" font-size="8.500" font-weight="bold" fill="#3c3f41">9+</text></svg>
<div class="a" style="left:1648px;top:883px;letter-spacing:-.25px;font-size:12px">Event Log</div>

<!-- status -->
<div class="r" style="left:1693px;top:908px;width:30px;height:12px;background:#5b5e60"></div>
<div class="r" style="left:1px;top:907px;width:10px;height:10px;border:1px solid #8a8d8f"></div>
<div class="a" style="left:21px;top:903px;letter-spacing:.05px">Huawei Cloud Toolkit: Welcome! hw060916011 (today 11:27)</div>
<svg class="i" style="left:1438px;top:906px" width="8" height="14"><circle cx="4" cy="2" r="1.700" fill="none" stroke="#a2a5a7"/><path d="M4 4v1M1.500 5.500h5L6 10H2zM2.500 10v3M5.500 10v3" fill="none" stroke="#a2a5a7"/></svg>
<div class="a" style="left:1462px;top:903px;letter-spacing:.25px">32:1 (67 chars)</div>
<div class="a" style="left:1559px;top:903px;letter-spacing:.25px">CRLF</div>
<div class="a" style="left:1599px;top:903px;letter-spacing:.25px">UTF-8</div>
<div class="a" style="left:1645px;top:903px;letter-spacing:-.1px">4 spaces</div>
<svg class="i" style="left:1705px;top:907px" width="15" height="13"><path d="M2 6V3a2.500 2.500 0 0 1 5 0" fill="none" stroke="#b0b2b4"/><rect x="1" y="6" width="9" height="7" fill="#b0b2b4"/></svg>
</body></html>
